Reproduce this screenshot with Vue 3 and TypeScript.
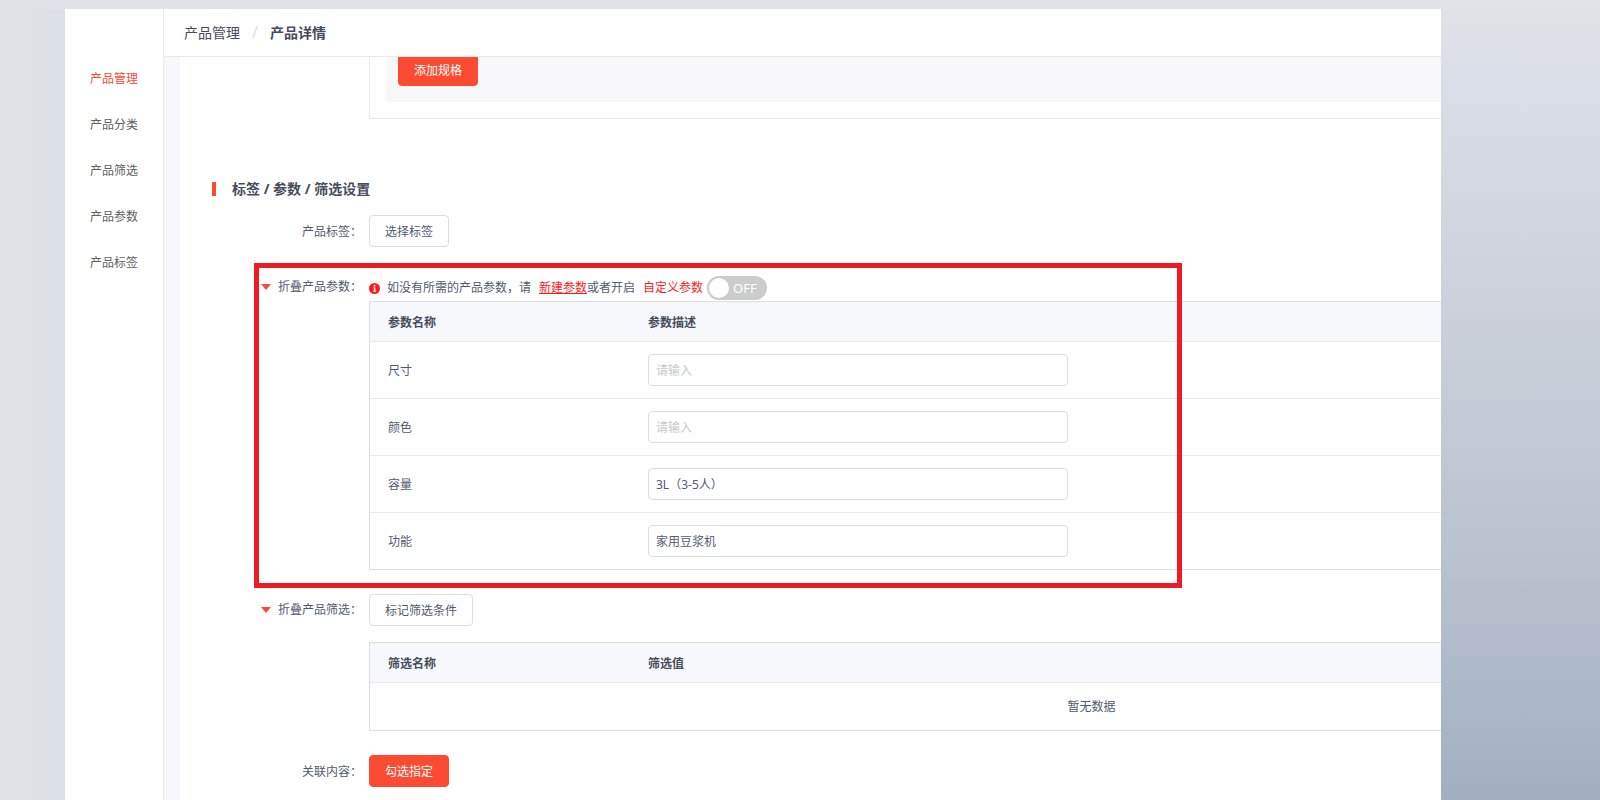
<script setup lang="ts">
import { ref } from 'vue'

interface Param {
  id: string
  name: string
  value: string
}

const menu: string[] = ['产品管理', '产品分类', '产品筛选', '产品参数', '产品标签']
const params = ref<Param[]>([
  { id: 'size', name: '尺寸', value: '' },
  { id: 'color', name: '颜色', value: '' },
  { id: 'capacity', name: '容量', value: '3L（3-5人）' },
  { id: 'function', name: '功能', value: '家用豆浆机' },
])
const customParams = ref(false)
const paramsOpen = ref(true)
const filtersOpen = ref(true)
</script>

<template>
  <div class="page" lang="zh-CN">
    <div class="gutter-left"></div>
    <div class="panel">
      <nav class="sidebar">
        <a v-for="(item, i) in menu" :key="item" href="#" :class="{ active: i === 0 }">{{ item }}</a>
      </nav>
      <div class="main">
        <header class="crumbs">
          <a href="#">产品管理</a>
          <span class="slash">/</span>
          <strong>产品详情</strong>
        </header>
        <main class="viewport">
          <form class="form" @submit.prevent>
            <div class="row">
              <div class="label"></div>
              <div class="field spec-box">
                <div class="spec-inner">
                  <button type="button" class="btn primary">添加规格</button>
                </div>
              </div>
            </div>

            <h2 class="title">标签 / 参数 / 筛选设置</h2>

            <div class="row tags">
              <div class="label">产品标签：</div>
              <div class="field">
                <button type="button" class="btn">选择标签</button>
              </div>
            </div>

            <div class="row params">
              <div class="label">
                <button type="button" class="fold" :aria-expanded="paramsOpen" @click="paramsOpen = !paramsOpen">
                  <svg width="10" height="6" viewBox="0 0 10 6" aria-hidden="true"><path d="M0 0h10L5 6z" fill="#fb4b32" /></svg>
                  折叠产品参数：
                </button>
              </div>
              <div class="field">
                <div class="note">
                  <svg class="info" width="11" height="11" viewBox="0 0 22 22" aria-hidden="true">
                    <circle cx="11" cy="11" r="11" fill="#ff1a1a" />
                    <circle cx="11.2" cy="5.6" r="1.9" fill="#fff" />
                    <path d="M8.2 8.8h4.6v6.6h1.6v1.9H8.2v-1.9h1.6v-4.7H8.2z" fill="#fff" />
                  </svg>
                  <span>如没有所需的产品参数，请</span>
                  <a class="create" href="#">新建参数</a>
                  <span>或者开启</span>
                  <label class="custom" for="custom-switch">
                    自定义参数
                    <span class="switch" :class="{ on: customParams }">
                      <input id="custom-switch" v-model="customParams" type="checkbox" role="switch" />
                      <span>{{ customParams ? 'ON' : 'OFF' }}</span>
                    </span>
                  </label>
                </div>
                <table v-show="paramsOpen">
                  <thead>
                    <tr>
                      <th class="name" scope="col">参数名称</th>
                      <th scope="col">参数描述</th>
                    </tr>
                  </thead>
                  <tbody>
                    <tr v-for="p in params" :key="p.id">
                      <td><label :for="p.id">{{ p.name }}</label></td>
                      <td class="entry"><input :id="p.id" v-model="p.value" class="text" type="text" placeholder="请输入" /></td>
                    </tr>
                  </tbody>
                </table>
              </div>
              <div class="highlight"></div>
            </div>

            <div class="row filters">
              <div class="label">
                <button type="button" class="fold" :aria-expanded="filtersOpen" @click="filtersOpen = !filtersOpen">
                  <svg width="10" height="6" viewBox="0 0 10 6" aria-hidden="true"><path d="M0 0h10L5 6z" fill="#fb4b32" /></svg>
                  折叠产品筛选：
                </button>
              </div>
              <div class="field">
                <button type="button" class="btn">标记筛选条件</button>
                <table v-show="filtersOpen">
                  <thead>
                    <tr>
                      <th class="name" scope="col">筛选名称</th>
                      <th scope="col">筛选值</th>
                    </tr>
                  </thead>
                  <tbody>
                    <tr>
                      <td class="empty" colspan="2">暂无数据</td>
                    </tr>
                  </tbody>
                </table>
              </div>
            </div>

            <div class="row related">
              <div class="label">关联内容：</div>
              <div class="field">
                <button type="button" class="btn primary">勾选指定</button>
              </div>
            </div>
          </form>
        </main>
      </div>
    </div>
    <div class="gutter-right"></div>
  </div>
</template>

<style>
body {
  margin: 0;
  overflow: hidden;
}
</style>

<style scoped>
.page {
  display: flex;
  height: 100vh;
  overflow: hidden;
  background: #dfe3e8;
  color: #515a6e;
  font: 12px/20px 'Noto Sans', 'Noto Sans CJK SC', sans-serif;
}

a {
  color: inherit;
  text-decoration: none;
}

button,
input {
  font: inherit;
  color: inherit;
}

.gutter-left {
  flex: 0 0 65px;
  margin-top: 9px;
  background: linear-gradient(to right, #dfe3e8 20px, #dde0e5 54px, #dce0e9 56px);
}

.gutter-right {
  flex: 0 0 159px;
  background: linear-gradient(#e0e4e8, #dadee6 10%, #ced3dd 33%, #c4cad5 54%, #b5bfcc 75%, #a3afc1);
}

.panel {
  display: flex;
  flex: 1;
  min-width: 0;
  margin-top: 9px;
  background: #fff;
}

.sidebar {
  display: flex;
  flex: 0 0 98px;
  flex-direction: column;
  align-items: center;
  padding-top: 47px;
  border-right: 1px solid #eaeaec;
}

.sidebar a {
  color: #606060;
  line-height: 46px;
}

.sidebar a.active {
  color: #fb4b32;
}

.main {
  display: flex;
  flex: 1;
  flex-direction: column;
  min-width: 0;
}

.crumbs {
  display: flex;
  gap: 12px;
  flex: 0 0 47px;
  padding-left: 20px;
  border-bottom: 1px solid #e8eaec;
  color: #464c5b;
  font-size: 14px;
  line-height: 47px;
}

.slash {
  color: #dcdee2;
  font-size: 16px;
}

.viewport {
  flex: 1;
  min-height: 0;
  padding-left: 16px;
  overflow: hidden;
  background: #f7f8fc;
}

.form {
  box-sizing: border-box;
  min-width: 1634px;
  min-height: 100%;
  margin-top: -3px;
  padding-bottom: 24px;
  background: #fff;
}

.row {
  display: grid;
  grid-template-columns: 182px minmax(0, 1fr);
  column-gap: 7px;
}

.label {
  line-height: 34px;
  text-align: right;
}

.spec-box {
  border: solid #e8eaec;
  border-width: 0 1px 1px;
}

.spec-inner {
  margin: 0 16px 16px;
  padding: 0 12px 16px;
  border-radius: 4px;
  background: #f8f8fa;
}

.btn {
  display: block;
  height: 32px;
  padding: 2px 15px 0;
  border: 1px solid #dcdee2;
  border-radius: 4px;
  background: #fff;
  line-height: 28px;
}

.btn.primary {
  border-color: #fb4b32;
  background: #fb4b32;
  color: #fff;
}

.title {
  display: flex;
  align-items: center;
  gap: 16px;
  margin: 60px 0 16px 32px;
  color: #464c5b;
  font-size: 14px;
  line-height: 20px;
}

.title::before {
  width: 4px;
  height: 14px;
  background: #fb4b32;
  content: '';
}

.tags {
  height: 32px;
}

.params {
  position: relative;
  margin-top: 16px;
  padding: 8px 0 18px;
}

.highlight {
  position: absolute;
  top: 0;
  bottom: 0;
  left: 74px;
  width: 918px;
  border: 5px solid #ed1c24;
  pointer-events: none;
}

.fold {
  display: flex;
  align-items: center;
  gap: 7px;
  height: 32px;
  margin-left: auto;
  padding: 0;
  border: 0;
  background: none;
}

.note {
  display: flex;
  align-items: center;
  height: 26px;
  padding-top: 4px;
}

.info {
  margin-right: 7px;
}

.create {
  margin-left: 8px;
  color: #ff1a1a;
  text-decoration: underline;
}

.custom {
  display: flex;
  align-items: center;
  gap: 4px;
  margin-left: 8px;
  color: #ff1a1a;
}

.switch {
  display: flex;
  align-items: center;
  gap: 4px;
  box-sizing: border-box;
  width: 60px;
  height: 24px;
  padding: 0 2px;
  border-radius: 12px;
  background: #ccc;
  color: #fff;
  font-size: 13px;
}

.switch.on {
  flex-direction: row-reverse;
  background: #fb4b32;
}

.switch input {
  width: 20px;
  height: 20px;
  margin: 0;
  border-radius: 50%;
  background: #fff;
  appearance: none;
}

table {
  width: 100%;
  border: 1px solid #dcdee2;
  border-spacing: 0;
}

th,
td {
  box-sizing: border-box;
  height: 57px;
  padding: 2px 18px 0;
  border-bottom: 1px solid #e8eaec;
  text-align: left;
}

th {
  height: 40px;
  background: #f7f8fc;
  color: #464c5b;
}

td.entry {
  padding-top: 0;
}

.name {
  width: 260px;
}

tbody tr:last-child td {
  height: 56px;
  border-bottom: 0;
}

.text {
  display: block;
  box-sizing: border-box;
  width: 420px;
  height: 32px;
  padding: 0 7px;
  border: 1px solid #dcdee2;
  border-radius: 4px;
  background: #fff;
}

.text::placeholder {
  color: #c5c8ce;
}

.filters {
  margin-top: 6px;
}

.filters table {
  margin-top: 16px;
}

tbody tr:last-child td.empty {
  height: 47px;
  padding-top: 0;
  text-align: center;
}

.related {
  margin-top: 24px;
}
</style>
